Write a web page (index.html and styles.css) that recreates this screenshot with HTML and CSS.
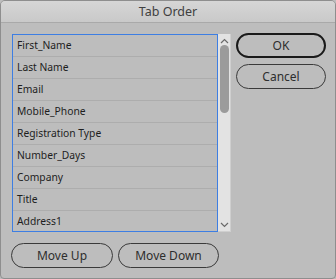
FILE: index.html
```html
<!DOCTYPE html>
<html lang="en">
<head>
    <meta charset="UTF-8">
    <meta name="viewport" content="width=device-width, initial-scale=1.0">
    <title>Tab Order</title>
    <link rel="stylesheet" href="styles.css">
</head>
<body>

    <div class="window">
        <div class="title-bar">Tab Order</div>

        <div class="content">
            <div class="top-row">
                <!-- Field list with its scroll bar -->
                <div class="list-wrap">
                    <div class="field-list">
                        <div class="field">First_Name</div>
                        <div class="field">Last Name</div>
                        <div class="field">Email</div>
                        <div class="field">Mobile_Phone</div>
                        <div class="field">Registration Type</div>
                        <div class="field">Number_Days</div>
                        <div class="field">Company</div>
                        <div class="field">Title</div>
                        <div class="field">Address1</div>
                    </div>
                    <div class="scrollbar">
                        <svg class="arrow" width="9" height="6" viewBox="0 0 9 6"><path d="M1 5 L4.5 1.5 L8 5" fill="none" stroke="#6a6a6a" stroke-width="1.2"/></svg>
                        <div class="thumb"></div>
                        <svg class="arrow down" width="9" height="6" viewBox="0 0 9 6"><path d="M1 1 L4.5 4.5 L8 1" fill="none" stroke="#6a6a6a" stroke-width="1.2"/></svg>
                    </div>
                </div>

                <div class="side-buttons">
                    <button class="button default">OK</button>
                    <button class="button">Cancel</button>
                </div>
            </div>

            <div class="bottom-row">
                <button class="button move-up">Move Up</button>
                <button class="button move-down">Move Down</button>
            </div>
        </div>
    </div>

</body>
</html>
```

FILE: styles.css
```css
body {
    margin: 0;
    background-color: #bdbdbd;
    font-family: "Noto Sans", sans-serif;
}

.window {
    width: 336px;
    height: 279px;
    box-sizing: border-box;
    border: 1px solid #8e8e8e;
    border-radius: 5px 5px 4px 4px;
    background-color: #bdbdbd;
    overflow: hidden;
}

.title-bar {
    height: 21px;
    line-height: 21px;
    text-align: center;
    font-size: 12.5px;
    color: #404040;
    background: linear-gradient(#d6d6d6, #c9c9c9);
    border-bottom: 1px solid #a9a9a9;
}

.content {
    padding: 10px 0 0 10px;
}

.top-row {
    display: flex;
}

.list-wrap {
    display: flex;
    margin-top: 1px;
    margin-left: 1px;
    height: 198px;
}

.field-list {
    width: 204px;
    height: 196px;
    border: 1px solid #3d7ee3;
    overflow: hidden;
}

.field {
    height: 21px;
    line-height: 21px;
    padding-left: 4px;
    font-size: 10.3px;
    color: #1e1e1e;
    border-bottom: 1px solid #adadad;
}

.scrollbar {
    width: 12px;
    background-color: #e3e3e3;
    border-right: 1px solid #cfcfcf;
    border-bottom: 1px solid #cfcfcf;
    display: flex;
    flex-direction: column;
    align-items: center;
}

.arrow {
    margin-top: 4px;
}

.arrow.down {
    margin-top: auto;
    margin-bottom: 3px;
}

.thumb {
    width: 9px;
    height: 68px;
    margin-top: 1px;
    border-radius: 5px;
    background-color: #9b9b9b;
}

.side-buttons {
    display: flex;
    flex-direction: column;
    gap: 6px;
    margin-left: 5px;
}

.button {
    box-sizing: border-box;
    height: 25px;
    padding: 0;
    background-color: transparent;
    border: 1px solid #3a3a3a;
    border-radius: 13px;
    font-family: "Noto Sans", sans-serif;
    font-size: 12px;
    color: #2e2e2e;
}

.side-buttons .button {
    width: 90px;
}

.button.default {
    border: 2px solid #1a1a1a;
}

.bottom-row {
    display: flex;
    gap: 5px;
    margin-top: 11px;
}

.move-up {
    width: 102px;
}

.move-down {
    width: 101px;
}
```
